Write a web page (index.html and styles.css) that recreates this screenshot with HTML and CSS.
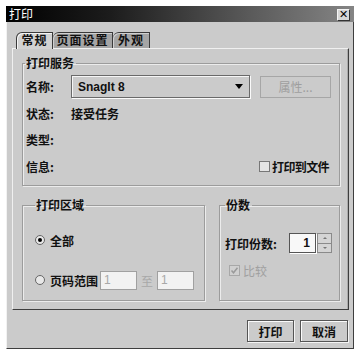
FILE: index.html
```html
<!DOCTYPE html>
<html>
<head>
<meta charset="utf-8">
<link rel="stylesheet" href="styles.css">
</head>
<body>
<div class="window">
  <div class="titlebar">
    <span class="title">打印</span>
    <span class="close">✕</span>
  </div>
  <div class="content">
    <div class="tabs">
      <div class="tab t1 active">常规</div>
      <div class="tab t2">页面设置</div>
      <div class="tab t3">外观</div>
    </div>
    <div class="panel">
      <fieldset class="group service">
        <legend>打印服务</legend>
        <div class="row r1">
          <span class="lbl">名称:</span>
          <div class="combo"><span class="combo-text">SnagIt 8</span><span class="arrow"></span></div>
          <div class="btn prop">属性...</div>
        </div>
        <div class="row r2"><span class="lbl">状态:</span><span class="val">接受任务</span></div>
        <div class="row r3"><span class="lbl">类型:</span></div>
        <div class="row r4"><span class="lbl">信息:</span><span class="check"><span class="box"></span><span class="check-text">打印到文件</span></span></div>
      </fieldset>
      <div class="lower">
        <fieldset class="group area">
          <legend>打印区域</legend>
          <div class="arow a1"><span class="radio on"></span><span>全部</span></div>
          <div class="arow a2">
            <span class="radio"></span><span class="range-lbl">页码范围</span>
            <span class="field">1</span><span class="to">至</span><span class="field">1</span>
          </div>
        </fieldset>
        <fieldset class="group copies">
          <legend>份数</legend>
          <div class="crow">
            <span class="clbl">打印份数:</span>
            <span class="spin-field">1</span>
            <span class="spin-btns"><span class="up"></span><span class="down"></span></span>
          </div>
          <div class="crow2"><span class="box dis"><svg width="9" height="9" viewBox="0 0 9 9"><path d="M1.5 4.5 L3.5 6.8 L7.5 1.8" fill="none" stroke="#9a9a9a" stroke-width="1.5"/></svg></span><span class="dis-text">比较</span></div>
        </fieldset>
      </div>
    </div>
    <div class="buttons">
      <div class="btn b-print">打印</div>
      <div class="btn b-cancel">取消</div>
    </div>
  </div>
</div>
</body>
</html>
```
FILE: styles.css
```css
* { box-sizing: border-box; }
html, body { margin: 0; padding: 0; background: #fff; }
body {
  font-family: "Noto Sans CJK SC", "Liberation Sans", sans-serif;
  font-size: 12px;
  font-weight: 700;
  color: #111;
}
.window {
  margin: 6px 0 0 6px;
  width: 348px;
  height: 343px;
  background: #cbcbcb;
  border-left: 1px solid #f2f2f2;
  border-right: 1px solid #3e3e3e;
  border-bottom: 1px solid #3e3e3e;
  display: flex;
  flex-direction: column;
}
.titlebar {
  height: 16px;
  margin-left: -1px;
  margin-right: -1px;
  background: linear-gradient(to right, #000 0%, #1c1c1c 30%, #5a5a5a 70%, #858585 100%);
  display: flex;
  align-items: center;
  padding: 0 4px 0 3px;
}
.title {
  color: #fff;
  font-weight: 400;
  font-size: 12px;
  line-height: 14px;
}
.close {
  margin-left: auto;
  margin-top: 2px;
  width: 13px;
  height: 12px;
  background: #d6d6d6;
  border: 1px solid #f4f4f4;
  border-right-color: #333;
  border-bottom-color: #333;
  color: #000;
  font-size: 11px;
  line-height: 10px;
  text-align: center;
  font-family: "DejaVu Sans", sans-serif;
  font-weight: 700;
}
.content {
  flex: 1;
  padding: 10px 4px 6px 5px;
  display: flex;
  flex-direction: column;
}
.tabs {
  display: flex;
  height: 16px;
  padding-left: 4px;
  position: relative;
  z-index: 1;
}
.tab {
  height: 16px;
  border: 1px solid #3a3a3a;
  border-bottom: none;
  border-top-left-radius: 6px;
  background: #a5a5a5;
  line-height: 14px;
  text-align: center;
  letter-spacing: 1px;
  box-shadow: inset 1px 1px 0 #d0d0d0;
}
.tab.active {
  background: #d2d2d2;
  height: 17px;
  box-shadow: inset 1px 1px 0 #f4f4f4;
}
.t1 { width: 37px; }
.t2 { width: 60px; border-left: none; }
.t3 { width: 37px; border-left: none; }
.panel {
  height: 262px;
  border: 1px solid #3e3e3e;
  border-left-color: #f0f0f0;
  border-top-color: #f0f0f0;
  box-shadow: inset -1px 0 0 #aaa;
  padding: 7px 8px 8px 9px;
  display: flex;
  flex-direction: column;
}
.group {
  margin: 0;
  min-width: 0;
  border: 1px solid #9c9c9c;
  box-shadow: 1px 1px 0 #ececec, inset 1px 1px 0 #ececec;
}
.group legend {
  padding: 0 2px 0 1px;
  line-height: 14px;
  height: 14px;
}
.service {
  height: 130px;
  padding: 5px 8px 5px 2px;
}
.row {
  display: flex;
  align-items: center;
  padding-left: 1px;
}
.r1 { height: 23px; }
.r2 { height: 26px; margin-top: 2px; }
.r3 { height: 26px; }
.r4 { height: 28px; }
.lbl { width: 45px; flex: none; }
.combo {
  width: 179px;
  height: 23px;
  border: 1px solid #6a6a6a;
  box-shadow: 1px 1px 0 #fafafa, inset 1px 1px 0 #f6f6f6;
  display: flex;
  align-items: center;
  padding: 0 6px;
  font-family: "Liberation Sans", sans-serif;
  font-size: 12px;
}
.arrow {
  margin-left: auto;
  width: 0;
  height: 0;
  border-left: 4px solid transparent;
  border-right: 4px solid transparent;
  border-top: 5px solid #000;
}
.btn {
  display: flex;
  align-items: center;
  justify-content: center;
  border: 1px solid #555;
  box-shadow: inset 1px 1px 0 #fbfbfb, 1px 1px 0 #f4f4f4;
}
.prop {
  margin-left: 10px;
  width: 71px;
  height: 22px;
  border-color: #a6a6a6;
  box-shadow: none;
  color: #9e9e9e;
  font-weight: 400;
}
.check {
  margin-left: auto;
  display: flex;
  align-items: center;
  gap: 2px;
  margin-right: 2px;
}
.check-text { letter-spacing: -0.6px; }
.box {
  width: 11px;
  height: 11px;
  border: 1px solid #777;
  background: #e4e4e4;
  display: inline-flex;
  align-items: center;
  justify-content: center;
}
.lower {
  display: flex;
  gap: 14px;
  margin-top: 12px;
}
.area, .copies {
  height: 103px;
}
.area {
  width: 183px;
  padding: 17px 4px 9px 12px;
}
.copies {
  width: 121px;
  padding: 21px 4px 8px 5px;
}
.arow {
  display: flex;
  align-items: center;
  height: 22px;
}
.a2 { margin-top: 18px; }
.radio {
  width: 10px;
  height: 10px;
  border-radius: 50%;
  border: 1px solid #666;
  background: #e8e8e8;
  margin-right: 5px;
  display: inline-flex;
  align-items: center;
  justify-content: center;
  flex: none;
}
.radio.on::after {
  content: "";
  width: 4px;
  height: 4px;
  border-radius: 50%;
  background: #000;
}
.range-lbl { width: 50px; flex: none; }
.field {
  width: 37px;
  height: 19px;
  border: 1px solid #a0a0a0;
  background: #f2f2f2;
  color: #a8a8a8;
  font-weight: 400;
  font-family: "Liberation Sans", sans-serif;
  line-height: 17px;
  padding-left: 3px;
}
.to {
  color: #a8a8a8;
  font-weight: 400;
  width: 20px;
  text-align: center;
}
.crow {
  display: flex;
  align-items: center;
  height: 20px;
}
.clbl { width: 64px; flex: none; }
.spin-field {
  width: 27px;
  height: 20px;
  border: 1px solid #555;
  background: #f8f8f8;
  box-shadow: 1px 1px 0 #fff;
  text-align: right;
  padding-right: 5px;
  line-height: 18px;
  font-family: "Liberation Sans", sans-serif;
}
.spin-btns {
  width: 15px;
  height: 20px;
  margin-left: 1px;
  display: flex;
  flex-direction: column;
}
.spin-btns span {
  flex: 1;
  border: 1px solid #8a8a8a;
  background: #d4d4d4;
  display: flex;
  align-items: center;
  justify-content: center;
}
.spin-btns .down { border-top: none; }
.up::after, .down::after {
  content: "";
  width: 0;
  height: 0;
  border-left: 2px solid transparent;
  border-right: 2px solid transparent;
}
.up::after { border-bottom: 2px solid #777; }
.down::after { border-top: 2px solid #777; }
.crow2 {
  display: flex;
  align-items: center;
  height: 14px;
  margin-top: 10px;
  padding-left: 4px;
  gap: 3px;
}
.box.dis { border-color: #a8a8a8; background: #d0d0d0; }
.dis-text { color: #a0a0a0; font-weight: 400; }
.buttons {
  display: flex;
  justify-content: flex-end;
  gap: 6px;
  margin-top: 10px;
  padding-right: 1px;
}
.b-print { width: 47px; height: 22px; }
.b-cancel { width: 48px; height: 22px; }
```
